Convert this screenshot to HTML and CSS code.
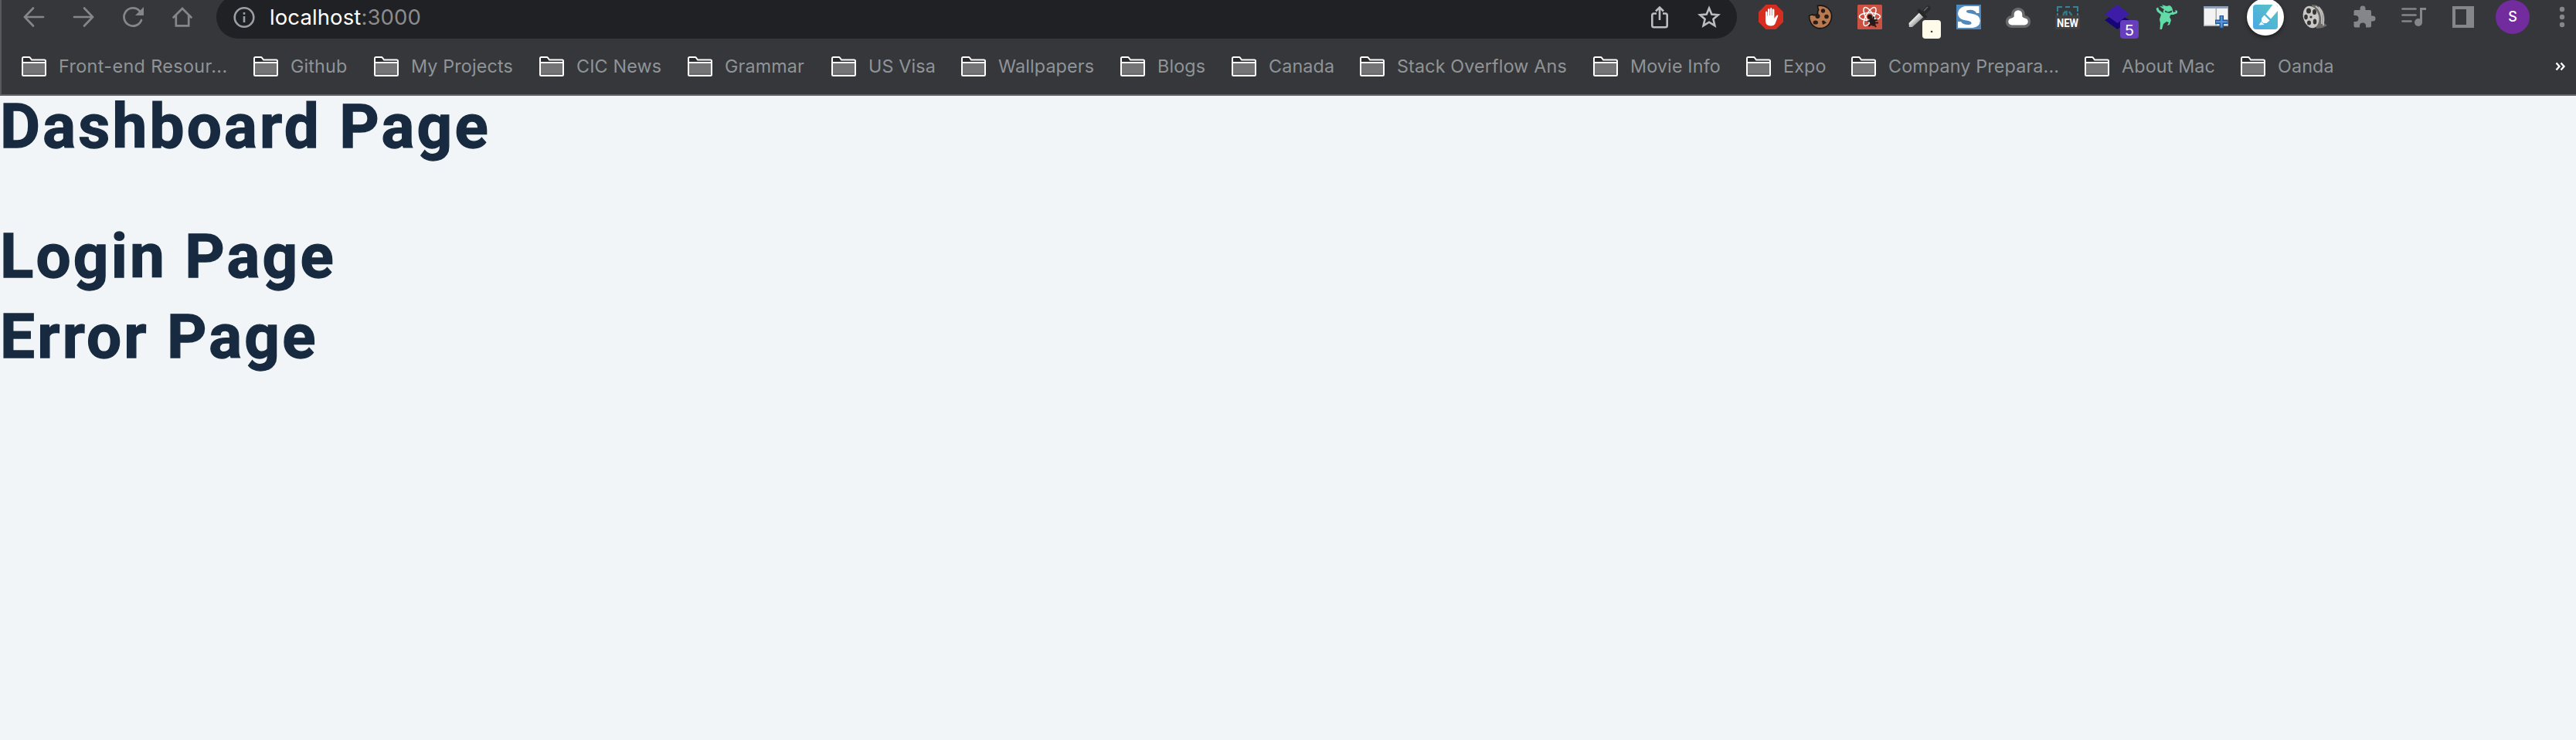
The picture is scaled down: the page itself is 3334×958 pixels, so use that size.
FILE: index.html
```html
<!DOCTYPE html>
<html lang="en">
<head>
<meta charset="utf-8">
<title>localhost:3000</title>
<link rel="stylesheet" href="styles.css">
</head>
<body>
<svg class="defs" width="0" height="0" aria-hidden="true">
  <symbol id="folder" viewBox="0 0 32 26">
    <path d="M1 24V2.500Q1 1 2.500 1H9.500Q10.500 1 11.200 2L13 4.500H29.500Q31 4.500 31 6V23.500Q31 25 29.500 25H2.500Q1 25 1 23.500Z" fill="#2b2b2e" stroke="#fff" stroke-width="2"/>
    <path d="M2 9H30V24H2Z" fill="#747476"/><path d="M2 22H30V24H2Z" fill="#666668"/>
    <path d="M1 8H31" stroke="#fff" stroke-width="2"/>
  </symbol>
</svg>
<header class="chrome">
  <div class="toolbar">
    <div class="nav">
      <svg class="icon" viewBox="0 0 32 32"><path d="M28 16H4.500M15 4.500L4 16L15 27.500" class="line"/></svg>
      <svg class="icon" viewBox="0 0 32 32"><path d="M4 16H27.500M17 4.500L28 16L17 27.500" class="line"/></svg>
      <svg class="icon" viewBox="0 0 32 32"><path d="M27 20A11.600 11.600 0 1 1 24.500 8" class="line"/><path d="M30 3V14H19Z" fill="#85868a"/></svg>
      <svg class="icon" viewBox="0 0 32 32"><path d="M4.500 16.500L16 5L27.500 16.500M7.800 14V27.300H24.200V14" class="line"/></svg>
    </div>
    <div class="omnibox">
      <svg class="icon info" viewBox="0 0 32 32"><circle cx="16" cy="16.500" r="12.300" fill="none" stroke="#9aa0a6" stroke-width="2.600"/><path d="M14.700 10H17.300V12.700H14.700ZM14.700 15H17.300V23H14.700Z" fill="#9aa0a6"/></svg>
      <span class="url"><b>localhost</b>:3000</span>
      <svg class="icon share" viewBox="0 0 32 32"><path d="M12 11.500H8.500Q6.300 11.500 6.300 13.700V27Q6.300 29.300 8.500 29.300H23.500Q25.700 29.300 25.700 27V13.700Q25.700 11.500 23.500 11.500H20M16 20V4M11 8.500L16 3.500L21 8.500" fill="none" stroke="#bdbdbf" stroke-width="2.600"/></svg>
      <svg class="icon star" viewBox="0 0 32 32"><path d="M16 4.600L19.300 12.500L27.800 13.200L21.400 18.800L23.400 27.200L16 22.700L8.600 27.200L10.600 18.800L4.200 13.200L12.700 12.500Z" fill="none" stroke="#bdbdbf" stroke-width="2.600"/></svg>
    </div>
    <div class="extensions">
      <svg class="icon" viewBox="0 0 32 32"><path d="M9.500 0H22.500L32 9.500V22.500L22.500 32H9.500L0 22.500V9.500Z" fill="#d62d20"/><path d="M9 17V10Q9 8.500 10.200 8.500T11.500 10V14.500H12V6.500Q12 5 13.200 5T14.500 6.500V14H15V5.500Q15 4 16.200 4T17.500 5.500V14H18V7Q18 5.500 19.200 5.500T20.400 7V18L23 14.200Q25.300 12.500 25.300 14.500L21.800 24Q20.500 27.500 15.700 27.500Q9 27.500 9 20.500Z" fill="#fff"/></svg>
      <svg class="icon" viewBox="0 0 32 32"><path d="M12.500 1.500Q20 0 25.500 4.500Q31 9 30.500 16Q30 22 26 26.500Q20.500 31.500 13 30.500Q6.500 29 3.500 23Q1.500 19 1.500 14.500Q4 13 6 13Q8.500 14.500 11 13Q13.500 11.500 12.500 9Q14.500 7 13 5Z" fill="#b97950" stroke="#171513" stroke-width="1.600"/><g fill="#241d1a"><circle cx="19.500" cy="8" r="2.700"/><circle cx="12.500" cy="15" r="3"/><circle cx="24" cy="15.500" r="2.800"/><ellipse cx="9.800" cy="23" rx="3.200" ry="2.600"/><path d="M18 21L20.500 20.500L24 23.500L19 26Z"/></g></svg>
      <svg class="icon" viewBox="0 0 32 32"><rect width="32" height="32" rx="1.500" fill="#cb5143"/><g fill="none" stroke="#fff" stroke-width="1.500"><ellipse cx="16" cy="15.500" rx="13.500" ry="5"/><ellipse cx="16" cy="15.500" rx="13.500" ry="5" transform="rotate(60 16 15.500)"/><ellipse cx="16" cy="15.500" rx="13.500" ry="5" transform="rotate(120 16 15.500)"/></g><path d="M18 18L26 20V31H18L14 29Z" fill="#cb5143"/><circle cx="16" cy="15.800" r="3" fill="#241a1a"/><ellipse cx="19.500" cy="22.500" rx="3.600" ry="5.500" transform="rotate(-28 19.500 22.500)" fill="#241a1a"/><path d="M20 19L21.500 15.500M22 20.500L26 19.500M23 23.500H27M17 21L13 21.500M18 25L14.500 28M22 26L24 29" stroke="#241a1a" stroke-width="2"/></svg>
      <span class="ext"><svg class="icon" viewBox="0 0 32 32"><defs><linearGradient id="metal" x1="0" y1="0" x2="1" y2="1"><stop offset=".35" stop-color="#f0f0f0"/><stop offset=".7" stop-color="#8d8d8d"/></linearGradient></defs><path d="M2.500 24L16.500 10L22 15.500L7 29L3 29Z" fill="url(#metal)"/><path d="M14.500 6.500L25 17" stroke="#262626" stroke-width="4"/><path d="M19 9L25 2.500Q28 0 30 2.500T28.500 8.500L23 13Z" fill="#292a2b"/><path d="M22 8L27 3" stroke="#66686a" stroke-width="1.500"/></svg><i class="badge cream">.</i></span>
      <svg class="icon" viewBox="0 0 32 32"><rect width="32" height="32" fill="#5089bd"/><path d="M29.500 2V11H26Q24.500 7 18 6.800Q12.500 6.800 13 9Q13.200 10.800 19 11.500Q31 13 30.800 21Q30.500 29 21 30H2V22H6Q8 26 14.500 26Q20 26 19.500 23.500Q19.200 21.500 13 20.500Q2 19 2 11.500Q2.200 4.500 11 2Z" fill="#fff"/></svg>
      <svg class="icon" viewBox="0 0 32 32"><path d="M8 26.500H24A4.500 4.500 0 0 0 24.500 17.500Q22.500 17 21.300 15.500V12.500A5.300 5.300 0 0 0 10.700 12.500V15.500Q9.500 17 7.500 17.500A4.500 4.500 0 0 0 8 26.500Z" fill="#fff" stroke="#69696b" stroke-width="7" stroke-linejoin="round" paint-order="stroke"/></svg>
      <svg class="icon" viewBox="0 0 32 32"><path d="M3 9V3H9M13 3H19M23 3H29V9M3 11V14M29 11V14" fill="none" stroke="#348397" stroke-width="2"/><path d="M10.500 14Q11 9 14.500 9V14M18 9L21.500 14" fill="none" stroke="#2c7b8b" stroke-width="2.500"/><rect y="14" width="32" height="18" fill="#414144"/><text x="16" y="28.500" class="new" text-anchor="middle" textLength="28" lengthAdjust="spacingAndGlyphs">NEW</text></svg>
      <span class="ext"><svg class="icon" viewBox="0 0 32 32"><path d="M0 20L15 10L32 20L16.500 32Z" fill="#160578"/><path d="M16 0L32 12L16.500 24L0 12Z" fill="#3d1da5"/></svg><i class="badge purple">5</i></span>
      <svg class="icon" viewBox="0 0 32 32"><path d="M11 5L7 2L12 2.500L10 0L16 2L20 1Q24 3 24 8L25 10L28 9L27 7L30 8V11L25 13L21.500 13L20 16L22 20L20 26L17 27L19 23L16 22L12 25L10 32H7.500L8 24L7 19L9 13L4 9L2.500 5L5 3.500L6.500 7L12 11Q11 8 13 6Z" fill="#62dba8"/><path d="M14 7.500L18 9.500L23 7.500V10L19 11L14 9.500Z" fill="#29433c"/></svg>
      <svg class="icon" viewBox="0 0 32 32"><rect y="2" width="32" height="26" fill="#a9abad"/><path d="M0 2H32V4.500H0Z" fill="#8ca0bc"/><path d="M1 5H15.500V26.500H1ZM17 5H31V26.500H17Z" fill="#f3f3f4"/><path d="M23.300 14V30.500M15 22.300H31.500" stroke="#23559b" stroke-width="5.500"/><path d="M23.300 15V29.500M16 22.300H30.500" stroke="#5796d5" stroke-width="2.500"/></svg>
      <span class="ext marker"><svg class="icon" viewBox="0 0 32 32"><defs><linearGradient id="aqua" x1="0" y1="1" x2="1" y2="0"><stop stop-color="#4aa9e7"/><stop offset="1" stop-color="#58c4c0"/></linearGradient></defs><rect width="32" height="32" rx="4" fill="url(#aqua)"/><path d="M16.500 12L25.500 0H30L32 3V8L23 18.500Z" fill="#fff"/><path d="M14.500 13.500L21.500 20.500L17.500 24H13.500L11 21.500V18Z" fill="#fff"/><path d="M10.500 22L14.500 26L7.500 26.500Z" fill="#fff"/></svg></span>
      <svg class="icon" viewBox="0 0 32 32"><path d="M12 0Q23 0 27 9Q30 17 28 24L32 27L26 30L18 31Z" fill="#6d6a68"/><path d="M17 2Q26 8 25 25M21 3Q29 12 27 27" fill="none" stroke="#d0cfcd" stroke-width="1.400"/><ellipse cx="11" cy="16" rx="10" ry="14.500" transform="rotate(-15 11 16)" fill="#c9c8c6"/><g fill="#353535"><ellipse cx="8" cy="8" rx="3" ry="3.500"/><ellipse cx="15.500" cy="9.500" rx="2.500" ry="3.500"/><ellipse cx="4.500" cy="16" rx="2.300" ry="3.300"/><ellipse cx="8.500" cy="23.500" rx="2.500" ry="3"/><ellipse cx="16" cy="22" rx="2.300" ry="3.500"/><circle cx="11" cy="16" r="1.600"/></g></svg>
      <svg class="icon" viewBox="0 0 32 32"><path d="M4 7H10.500V5A3.500 3.500 0 0 1 17.500 5V7H23Q25 7 25 9V14.500H27A3.500 3.500 0 0 1 27 21.500H25V27.500Q25 29.500 23 29.500H18V27.500A4 4 0 0 0 10 27.500V29.500H4.500Q2.500 29.500 2.500 27.500V22H4.500A4 4 0 0 0 4.500 14H2.500V9Q2.500 7 4 7Z" fill="#85868a"/></svg>
      <svg class="icon" viewBox="0 0 32 32"><path d="M1.500 5.500H18.500M1.500 13.500H18.500M1.500 21.500H12.500" class="line"/><path d="M25.500 23V5.500H32" fill="none" stroke="#85868a" stroke-width="3"/><circle cx="22" cy="23" r="5" fill="#85868a"/></svg>
      <svg class="icon" viewBox="0 0 32 32"><path fill-rule="evenodd" d="M2 2H30V30H2ZM6 6V26H20V6Z" fill="#85868a"/></svg>
      <span class="ext"><span class="avatar">S</span></span>
      <svg class="icon" viewBox="0 0 32 32" fill="#85868a"><circle cx="16" cy="6" r="3.200"/><circle cx="16" cy="16" r="3.200"/><circle cx="16" cy="26" r="3.200"/></svg>
    </div>
  </div>
  <nav class="bookmarks">
    <a><svg class="folder"><use href="#folder"/></svg><span class="wide">Front-end Resour...</span></a>
    <a><svg class="folder"><use href="#folder"/></svg><span>Github</span></a>
    <a><svg class="folder"><use href="#folder"/></svg><span>My Projects</span></a>
    <a><svg class="folder"><use href="#folder"/></svg><span>CIC News</span></a>
    <a><svg class="folder"><use href="#folder"/></svg><span>Grammar</span></a>
    <a><svg class="folder"><use href="#folder"/></svg><span>US Visa</span></a>
    <a><svg class="folder"><use href="#folder"/></svg><span>Wallpapers</span></a>
    <a><svg class="folder"><use href="#folder"/></svg><span>Blogs</span></a>
    <a><svg class="folder"><use href="#folder"/></svg><span>Canada</span></a>
    <a><svg class="folder"><use href="#folder"/></svg><span>Stack Overflow Ans</span></a>
    <a><svg class="folder"><use href="#folder"/></svg><span>Movie Info</span></a>
    <a><svg class="folder"><use href="#folder"/></svg><span>Expo</span></a>
    <a><svg class="folder"><use href="#folder"/></svg><span>Company Prepara...</span></a>
    <a><svg class="folder"><use href="#folder"/></svg><span>About Mac</span></a>
    <a><svg class="folder"><use href="#folder"/></svg><span>Oanda</span></a>
    <svg class="more" viewBox="0 0 14 12"><path d="M1.500 1.500L5.500 6L1.500 10.500M7.500 1.500L11.500 6L7.500 10.500" fill="none" stroke="#fff" stroke-width="2.300"/></svg>
  </nav>
</header>
<main class="page">
  <h1 class="spaced">Dashboard Page</h1>
  <h1>Login Page</h1>
  <h1>Error Page</h1>
</main>
</body>
</html>
```

FILE: styles.css
```css
* { box-sizing: border-box; }
body { margin: 0; height: 958px; overflow: hidden; background: #f1f5f8; font-family: Inter, "Liberation Sans", sans-serif; }
.defs { display: block; height: 0; }
.chrome { height: 124px; overflow: hidden; background: #36373a; border-bottom: 2px solid #616165; box-shadow: inset 2px 0 #58595c; }
.toolbar { display: flex; align-items: center; height: 56px; margin-top: -6px; padding-left: 28px; }
.nav { display: flex; gap: 32px; }
.icon { display: block; flex: none; width: 32px; height: 32px; overflow: visible; }
.line { fill: none; stroke: #85868a; stroke-width: 2.7; stroke-linecap: round; }
.omnibox { display: flex; align-items: center; width: 1968px; height: 56px; margin-left: 28px; padding: 0 20px; border-radius: 28px; background: #202124; }
.url { margin-left: 17px; margin-right: auto; color: #8b8c8e; font-size: 27.5px; line-height: 56px; letter-spacing: .1px; white-space: nowrap; }
.url b { color: #fff; font-weight: 400; }
.star { margin-left: 32px; }
.extensions { display: flex; gap: 32px; margin-left: 28px; }
.ext { position: relative; display: flex; flex: none; align-items: center; justify-content: center; width: 32px; height: 32px; }
.badge { position: absolute; left: 20px; top: 20px; width: 24px; height: 24px; border-radius: 4px; font: 500 20px/26px "Liberation Sans", sans-serif; text-align: center; }
.cream { background: #fffbea; color: #222; line-height: 18px; }
.purple { background: #673ebd; color: #fff; }
.marker::before { content: ""; position: absolute; inset: -8px; border-radius: 50%; background: #fff; box-shadow: 0 2px 5px #1b1b1d; }
.marker .icon { position: relative; }
.new { fill: #fff; font: 700 14.5px Roboto, sans-serif; }
.avatar { flex: none; width: 44px; height: 44px; border-radius: 50%; background: #722c9e; color: #fff; font: 500 18px/44px Inter, sans-serif; text-align: center; }
.bookmarks { display: grid; align-items: center; height: 72px; padding-left: 28px; grid-template-columns: 300px 156px 214px 192px 186px 168px 206px 144px 166px 302px 198px 136px 302px 202px 407px 14px; }
.bookmarks a { display: flex; align-items: center; gap: 16px; color: #8f9497; font-size: 23.3px; line-height: 28px; letter-spacing: .15px; white-space: nowrap; }
.bookmarks .wide { letter-spacing: .4px; }
.folder { display: block; flex: none; width: 32px; height: 26px; }
.more { display: block; width: 14px; height: 12px; }
h1 { margin: 0 0 24px; color: #172a3f; font: 700 80px/80px Roboto, sans-serif; letter-spacing: 3.2px; -webkit-text-stroke: 1.3px #172a3f; }
h1.spaced { margin-bottom: 88px; }
```
